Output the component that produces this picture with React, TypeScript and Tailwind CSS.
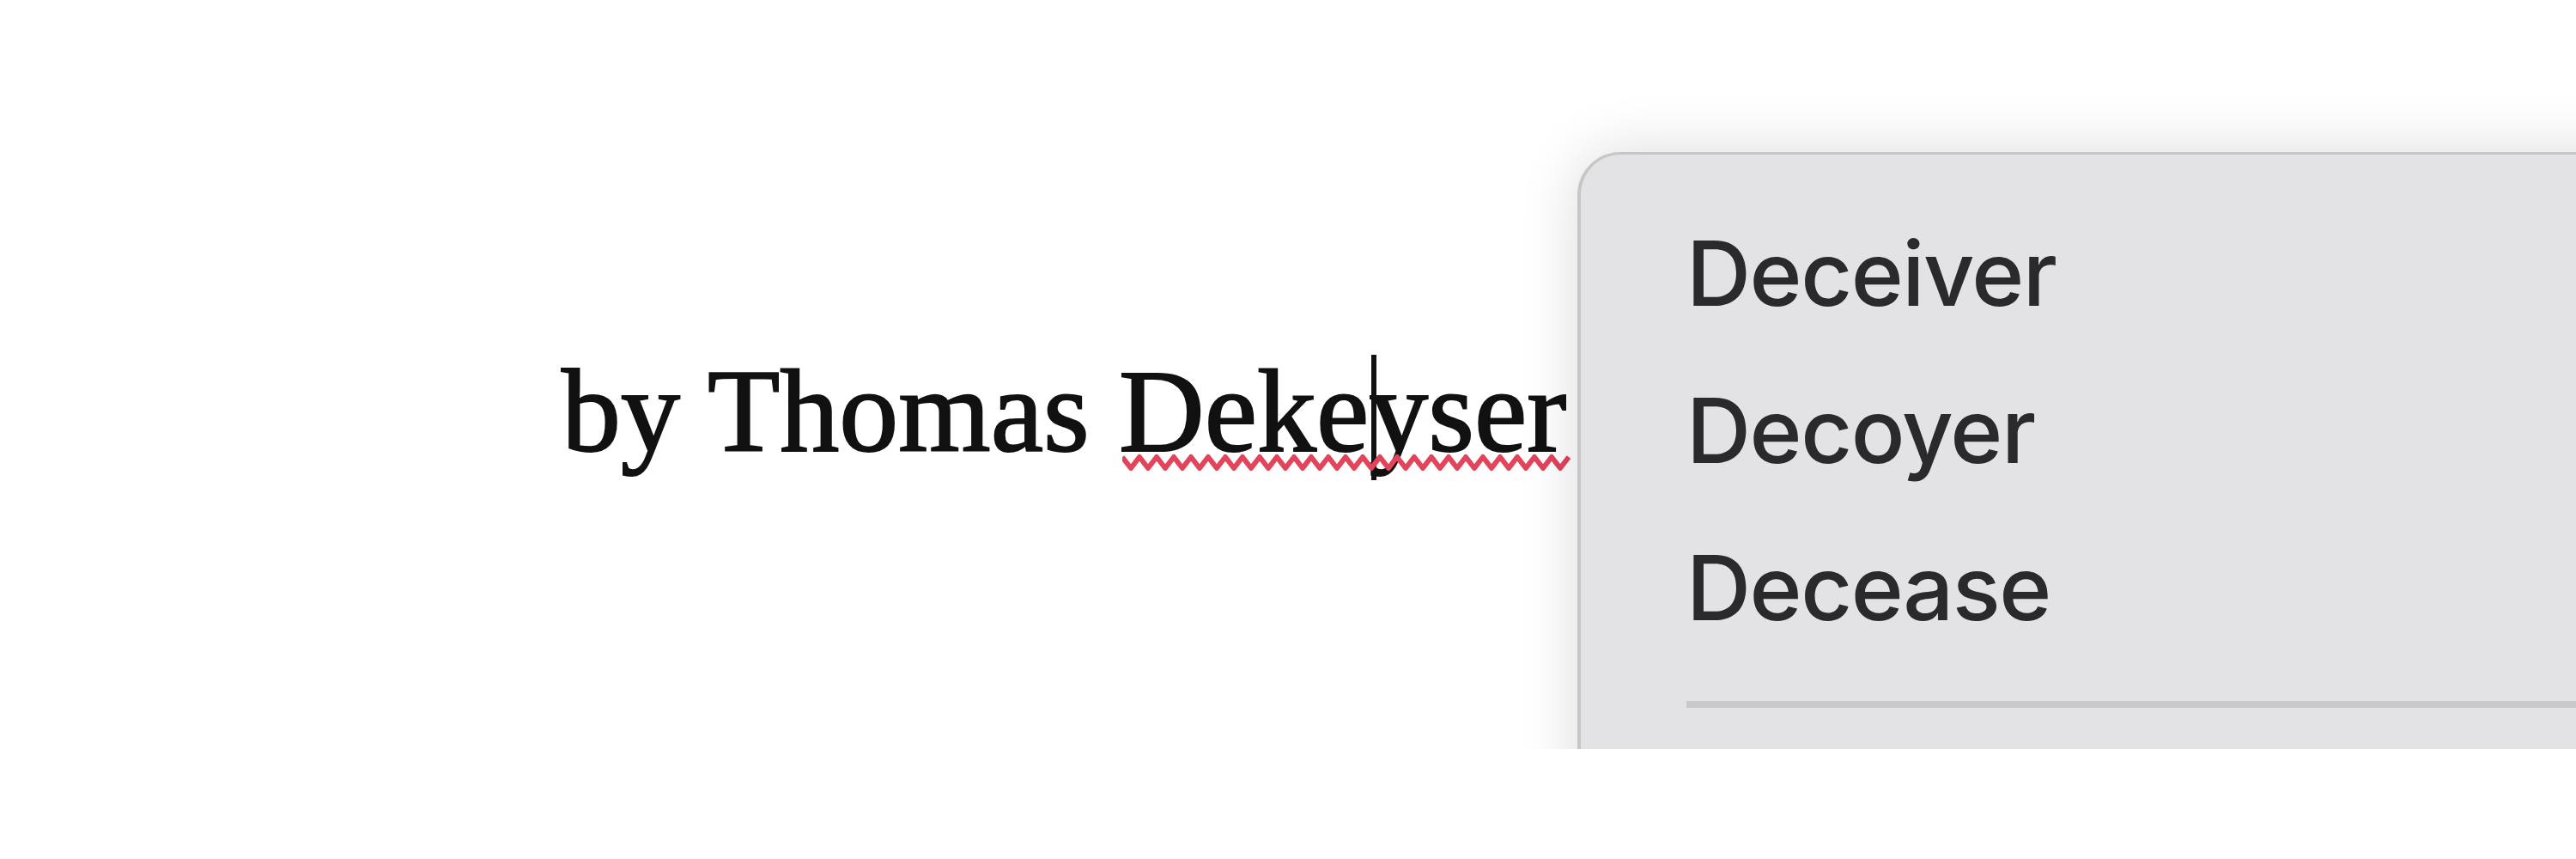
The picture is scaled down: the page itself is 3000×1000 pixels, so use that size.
import React from "react";

const suggestions = ["Deceiver", "Decoyer", "Decease"];

function Squiggle({ width }: { width: number }) {
  const period = 20;
  const pts: string[] = [];
  for (let x = 0, i = 0; x <= width; x += period / 2, i++) {
    pts.push(`${x},${i % 2 === 0 ? 4 : 17}`);
  }
  return (
    <svg width={width} height={22} className="block">
      <polyline
        points={pts.join(" ")}
        fill="none"
        stroke="#e2445c"
        strokeWidth={6}
        strokeLinejoin="round"
      />
    </svg>
  );
}

export default function App() {
  return (
    <div className="w-[3000px] h-[1000px] bg-white overflow-hidden">
      <div className="relative h-[872px] overflow-hidden">
        <div className="flex pt-[410px] pl-[654px]">
          <p
            className="text-[138px] leading-none text-[#111] whitespace-nowrap [-webkit-text-stroke:2px_#111]"
            style={{ fontFamily: '"Liberation Serif", "DejaVu Serif", serif' }}
          >
            by Thomas{" "}
            <span className="relative inline-block">
              Deke
              <span className="relative inline-block w-0">
                <span className="absolute left-[3px] -top-[112px] h-[146px] w-[6px] bg-[#111]" />
              </span>
              yser
              <span className="absolute left-[4px] top-[118px]">
                <Squiggle width={522} />
              </span>
            </span>
          </p>
        </div>

        {/* spelling menu */}
        <div className="absolute left-[1837px] top-[177px] flex flex-col w-[1400px] h-[900px] pt-[47px] pl-[123px] rounded-tl-[50px] bg-[#e3e3e5] border-l-[4px] border-t-[3px] border-[#c6c6c8] shadow-[0_0_70px_rgba(0,0,0,0.14)]">
          <div
            className="flex flex-col text-[#2a2a2c] font-medium"
            style={{ fontFamily: 'Inter, "Noto Sans", sans-serif' }}
          >
            {suggestions.map((s) => (
              <div key={s} className="h-[183px] leading-[183px] text-[104px] tracking-[-1.5px]">
                {s}
              </div>
            ))}
          </div>
          <div className="mt-[40px] h-[8px] bg-[#c9c9cb]" />
        </div>
      </div>
    </div>
  );
}
